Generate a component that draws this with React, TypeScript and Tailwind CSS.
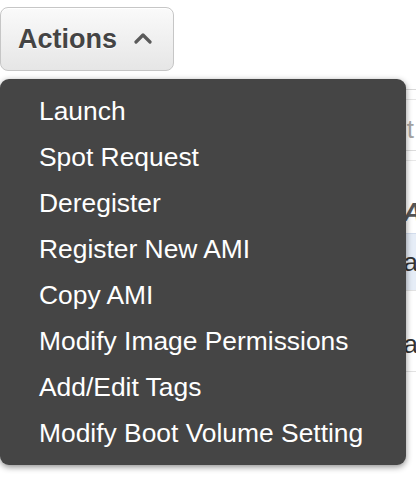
import { useState } from "react";

const items = [
  "Launch",
  "Spot Request",
  "Deregister",
  "Register New AMI",
  "Copy AMI",
  "Modify Image Permissions",
  "Add/Edit Tags",
  "Modify Boot Volume Setting",
];

export default function App() {
  const [open] = useState(true);

  return (
    <div className="relative w-[416px] h-[478px] bg-white overflow-hidden font-['Liberation_Sans',Arial,sans-serif]">
      {/* Actions button */}
      <div className="pt-[7px]">
        <button className="flex items-center w-[174px] h-[64px] pl-[17px] rounded-[8px] border border-[#c6c6c6] bg-gradient-to-b from-[#fafafa] to-[#e6e6e6] shadow-[inset_0_1px_0_#fff]">
          <span className="text-[27px] font-bold text-[#444] [text-shadow:0_1px_0_#fff] leading-none">Actions</span>
          <svg width="18" height="12" viewBox="0 0 18 12" className="ml-[17px] mt-[-2px]">
            <polyline points="2,10 9,3 16,10" fill="none" stroke="#5a5a5a" strokeWidth="3.2" strokeLinecap="round" strokeLinejoin="round" />
          </svg>
        </button>
      </div>

      {/* Table behind the menu */}
      <div className="mt-[18px] ml-[380px] w-[36px] text-[26px] leading-none">
        <div className="border-t border-[#d8d8d8] h-[10px]" />
        <div className="border-t border-[#e6e6e6] h-[51px] flex items-start justify-end pt-[16px] text-[#a5a5a5]">
          <span className="mr-[2px]">t</span>
        </div>
        <div className="border-t border-[#dcdcdc] h-[10px]" />
        <div className="border-t border-[#e8e8e8] h-[73px] flex items-start justify-end pt-[38px] font-bold italic text-[#555]">
          <span className="mr-[-6px]">A</span>
        </div>
        <div className="h-[57px] bg-[#e6edf7] border-t border-[#d3dded] flex items-center justify-end text-[#333]">
          <span className="mr-[-2px]">a</span>
        </div>
        <div className="h-[82px] border-t border-[#e2e2e2] border-b flex items-start justify-end pt-[40px] text-[#333]">
          <span className="mr-[-2px]">a</span>
        </div>
      </div>

      {/* Dropdown menu */}
      {open && (
        <ul className="absolute left-0 top-[79px] w-[406px] py-[9px] rounded-[9px] bg-[#454545] shadow-[0_2px_6px_rgba(0,0,0,0.45)]">
          {items.map((label) => (
            <li key={label} className="h-[46px] pl-[39px] flex items-center text-[26.4px] text-white leading-none">
              {label}
            </li>
          ))}
        </ul>
      )}
    </div>
  );
}
